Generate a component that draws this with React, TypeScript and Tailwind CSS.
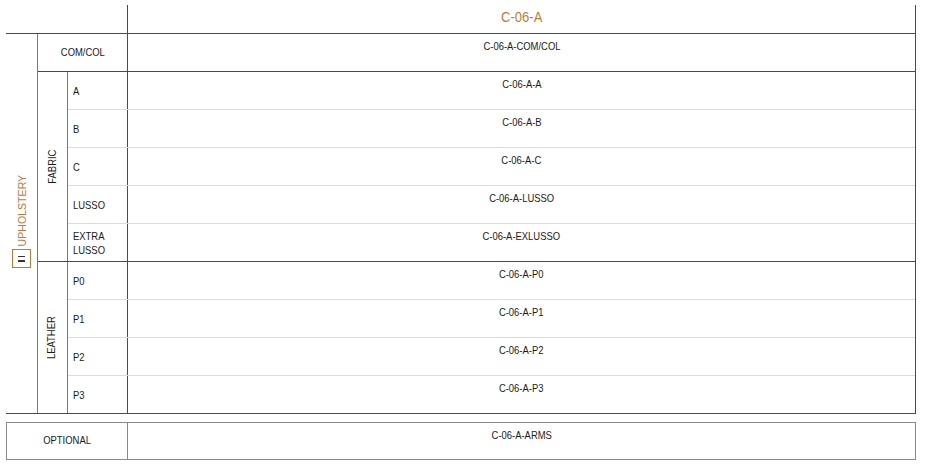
import type { ReactNode } from 'react';

const font = { fontFamily: '"Liberation Sans", Arial, sans-serif' };

type Row = { label: string; code: string; two?: boolean };

const fabric: Row[] = [
  { label: 'A', code: 'C-06-A-A' },
  { label: 'B', code: 'C-06-A-B' },
  { label: 'C', code: 'C-06-A-C' },
  { label: 'LUSSO', code: 'C-06-A-LUSSO' },
  { label: 'EXTRA LUSSO', code: 'C-06-A-EXLUSSO', two: true },
];

const leather: Row[] = [
  { label: 'P0', code: 'C-06-A-P0' },
  { label: 'P1', code: 'C-06-A-P1' },
  { label: 'P2', code: 'C-06-A-P2' },
  { label: 'P3', code: 'C-06-A-P3' },
];

// condensed look: the source font is a narrow face we don't have
function N({ children, left }: { children: ReactNode; left?: boolean }) {
  return (
    <span className={left ? 'inline-block scale-x-[0.82] origin-left' : 'inline-block scale-x-[0.82]'}>
      {children}
    </span>
  );
}

function Group({ name, rows }: { name: string; rows: Row[] }) {
  return (
    <div className="flex">
      <div className="w-[30px] shrink-0 border-r border-[#7a7a7a] flex items-center justify-center">
        <span className="inline-block -rotate-90 scale-x-[0.82] whitespace-nowrap text-[11.5px] text-[#1a1a1a]">
          {name}
        </span>
      </div>
      <div className="flex flex-col flex-1">
        {rows.map((r, i) => {
          const last = i === rows.length - 1;
          return (
            <div
              key={r.label}
              className={last ? 'flex h-[37px]' : 'flex h-[38px] border-b border-[#dcdcdc]'}
            >
              <div className="w-[59px] shrink-0 flex items-center pl-[5px] text-[11.5px] leading-[14px] text-[#1a1a1a]">
                <N left>
                  {r.two ? (
                    <>
                      EXTRA
                      <br />
                      LUSSO
                    </>
                  ) : (
                    r.label
                  )}
                </N>
              </div>
              <div className="flex-1 border-l border-[#4a4a4a] text-center pt-[5px] text-[11.5px] leading-[14px] text-[#1a1a1a]">
                <N>{r.code}</N>
              </div>
            </div>
          );
        })}
      </div>
    </div>
  );
}

export default function App() {
  return (
    <div className="w-[927px] h-[470px] bg-white pl-[6px] pt-[5px]" style={font}>
      <div className="w-[910px]">
        <div className="flex h-[28px]">
          <div className="w-[121px] shrink-0" />
          <div className="flex-1 border-l border-r border-[#4a4a4a] text-center pt-[3px] text-[15px] leading-[18px] text-[#c07a36]">
            <span className="inline-block scale-x-[0.87]">C-06-A</span>
          </div>
        </div>

        <div className="flex border-t border-b border-r border-[#4a4a4a]">
          <div className="w-[32px] shrink-0 border-r border-[#7a7a7a] flex flex-col items-center justify-center gap-[7px]">
            <div className="h-[63px] flex items-center justify-center pl-[2px]">
              <span className="inline-block -rotate-90 scale-x-[0.92] whitespace-nowrap text-[11.5px] text-[#c07a36]">
                UPHOLSTERY
              </span>
            </div>
            <div className="w-[19px] h-[19px] border border-[#c07a36] flex flex-col items-center justify-center gap-[3px]">
              <div className="w-[7px] h-[1.5px] bg-[#333]" />
              <div className="w-[7px] h-[1.5px] bg-[#333]" />
            </div>
          </div>

          <div className="flex flex-col flex-1">
            <div className="flex h-[38px] border-b border-[#4a4a4a]">
              <div className="w-[89px] shrink-0 flex items-center justify-center text-[11.5px] text-[#1a1a1a]">
                <N>COM/COL</N>
              </div>
              <div className="flex-1 border-l border-[#4a4a4a] text-center pt-[5px] text-[11.5px] leading-[14px] text-[#1a1a1a]">
                <N>C-06-A-COM/COL</N>
              </div>
            </div>
            <div className="border-b border-[#4a4a4a]">
              <Group name="FABRIC" rows={fabric} />
            </div>
            <Group name="LEATHER" rows={leather} />
          </div>
        </div>

        <div className="flex h-[38px] mt-[8px] border border-[#8a8a8a]">
          <div className="w-[120px] shrink-0 flex items-center justify-center text-[11.5px] text-[#1a1a1a]">
            <N>OPTIONAL</N>
          </div>
          <div className="flex-1 border-l border-[#8a8a8a] text-center pt-[5px] text-[11.5px] leading-[14px] text-[#1a1a1a]">
            <N>C-06-A-ARMS</N>
          </div>
        </div>
      </div>
    </div>
  );
}
